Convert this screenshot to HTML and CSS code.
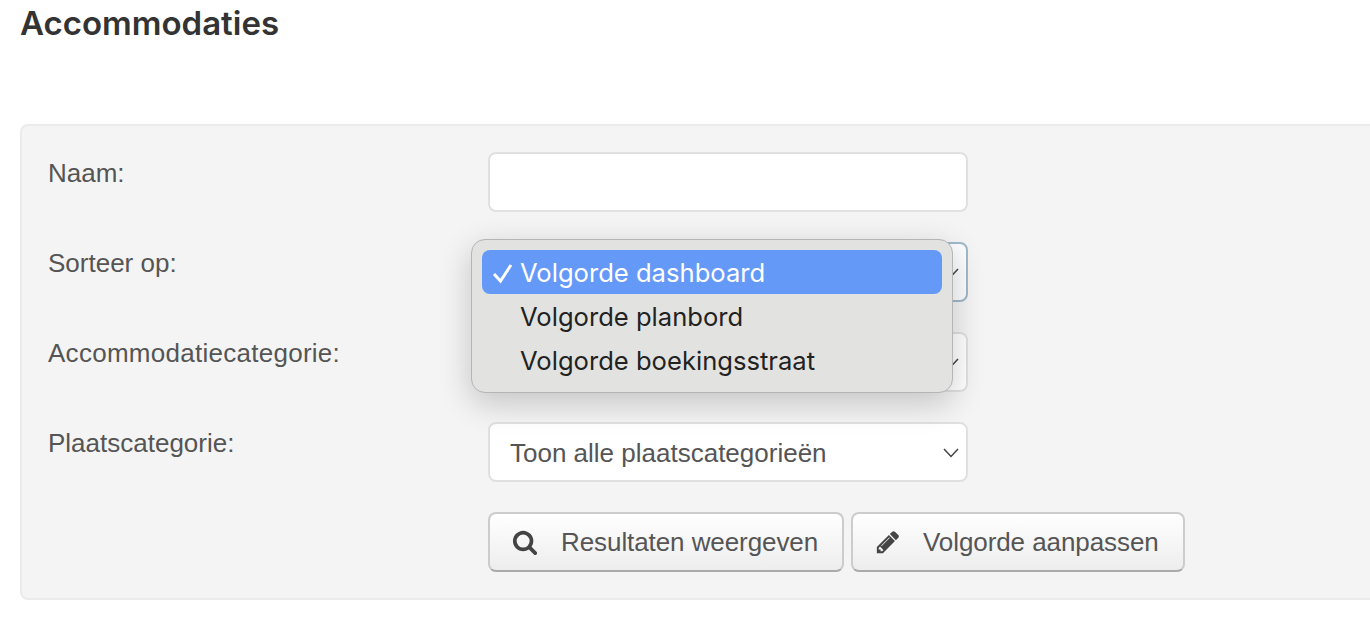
FILE: index.html
```html
<!DOCTYPE html>
<html lang="nl">
  <head>
    <meta charset="UTF-8" />
    <title>Accommodaties</title>
    <link rel="stylesheet" href="styles.css">
  </head>
  <body>
    <h1>Accommodaties</h1>

    <form class="filter-panel">
      <div class="form-row">
        <label for="naam">Naam:</label>
        <input id="naam" class="field" type="text" />
      </div>

      <div class="form-row">
        <label>Sorteer op:</label>
        <div class="field field-select field-focus">
          <svg class="chevron" viewBox="0 0 16 10"><path d="M1 1l7 7.5L15 1" /></svg>
        </div>
      </div>

      <div class="form-row">
        <label class="label-long">Accommodatiecategorie:</label>
        <div class="field field-select">
          <svg class="chevron" viewBox="0 0 16 10"><path d="M1 1l7 7.5L15 1" /></svg>
        </div>
      </div>

      <div class="form-row">
        <label>Plaatscategorie:</label>
        <div class="field field-select">
          <span>Toon alle plaatscategorieën</span>
          <svg class="chevron" viewBox="0 0 16 10"><path d="M1 1l7 7.5L15 1" /></svg>
        </div>
      </div>

      <div class="form-row">
        <div class="buttons">
          <button type="button" class="btn btn-search">
            <svg class="icon" viewBox="0 0 1792 1792"><path d="M1216 832q0-185-131.5-316.5t-316.5-131.5-316.5 131.5-131.5 316.5 131.5 316.5 316.5 131.5 316.5-131.5 131.5-316.5zm512 832q0 52-38 90t-90 38q-54 0-90-38l-343-342q-179 124-399 124-143 0-273.5-55.5t-225-150-150-225-55.5-273.5 55.5-273.5 150-225 225-150 273.5-55.5 273.5 55.5 225 150 150 225 55.5 273.5q0 220-124 399l343 343q37 37 37 90z" /></svg>
            <span>Resultaten weergeven</span>
          </button>
          <button type="button" class="btn btn-edit">
            <svg class="icon" viewBox="0 0 1792 1792"><path d="M491 1536l91-91-235-235-91 91v107h128v128h107zm523-928q0-22-22-22-10 0-17 7l-542 542q-7 7-7 17 0 22 22 22 10 0 17-7l542-542q7-7 7-17zm-54-192l416 416-832 832h-416v-416zm683 96q0 53-37 90l-166 166-416-416 166-165q36-38 90-38 53 0 91 38l235 234q37 39 37 91z" /></svg>
            <span>Volgorde aanpassen</span>
          </button>
        </div>
      </div>

      <!-- open native select menu -->
      <ul class="select-menu">
        <li class="selected">
          <svg class="check" viewBox="0 0 28 44"><path d="M2 24l6.5 7L19 15" /></svg>
          Volgorde dashboard
        </li>
        <li><span class="check"></span>Volgorde planbord</li>
        <li><span class="check"></span>Volgorde boekingsstraat</li>
      </ul>
    </form>
  </body>
</html>
```

FILE: styles.css
```css
* {
  box-sizing: border-box;
  margin: 0;
  padding: 0;
}

html,
body {
  height: 100%;
  overflow: hidden;
}

body {
  font-family: "Liberation Sans", Arial, sans-serif;
  font-size: 26px;
  background: #ffffff;
  color: #555555;
  padding: 0 0 0 20px;
}

h1 {
  font-family: Inter, Lato, sans-serif;
  font-size: 33px;
  font-weight: 600;
  line-height: 46px;
  color: #333333;
  height: 124px;
}

.filter-panel {
  position: relative;
  width: 1370px;
  padding: 26px;
  background: #f4f4f4;
  border: 2px solid #ebebeb;
  border-radius: 8px;
}

.form-row {
  display: flex;
  align-items: flex-start;
  padding-left: 440px;
  position: relative;
  height: 60px;
  margin-bottom: 30px;
}

.form-row:last-of-type {
  margin-bottom: 0;
}

label {
  position: absolute;
  left: 0;
  top: 3px;
  line-height: 36px;
}

.label-long {
  letter-spacing: 0.27px;
}

.field {
  width: 480px;
  height: 60px;
  background: #ffffff;
  border: 2px solid #e0e0e0;
  border-radius: 8px;
  font: inherit;
  color: #555555;
}

.field-select {
  display: flex;
  align-items: center;
  padding: 2px 7px 0 20px;
}

.field-focus {
  border-color: #9fb9cc;
  background: #fbfdfe;
}

.chevron {
  width: 16px;
  height: 10px;
  margin-left: auto;
  fill: none;
  stroke: #444444;
  stroke-width: 1.5;
}

.buttons {
  display: flex;
  gap: 7px;
}

.btn {
  display: flex;
  align-items: center;
  height: 60px;
  padding: 0 22px;
  font: inherit;
  letter-spacing: -0.08px;
  color: #555555;
  white-space: nowrap;
  background: linear-gradient(#ffffff, #ededed);
  border: 2px solid #cccccc;
  border-bottom-color: #aaaaaa;
  border-radius: 8px;
}

.icon {
  width: 26px;
  height: 26px;
  fill: #444444;
}

.btn-search {
  width: 356px;
  gap: 23px;
}

.btn-edit {
  width: 334px;
  gap: 22px;
}

.select-menu {
  position: absolute;
  left: 449px;
  top: 113px;
  width: 482px;
  height: 154px;
  padding: 10px;
  list-style: none;
  font-family: Inter, "Noto Sans", sans-serif;
  font-size: 25.6px;
  color: #222222;
  background: #e2e2e1;
  border: 1px solid #b5b5b5;
  border-radius: 14px;
  box-shadow: 0 10px 32px rgba(0, 0, 0, 0.2);
}

.select-menu li {
  display: flex;
  height: 44px;
  line-height: 46px;
  padding-left: 10px;
  border-radius: 8px;
}

.select-menu .selected {
  background: #6499f8;
  color: #ffffff;
}

.check {
  flex: 0 0 28px;
  height: 44px;
  fill: none;
  stroke: #ffffff;
  stroke-width: 3;
}
```
